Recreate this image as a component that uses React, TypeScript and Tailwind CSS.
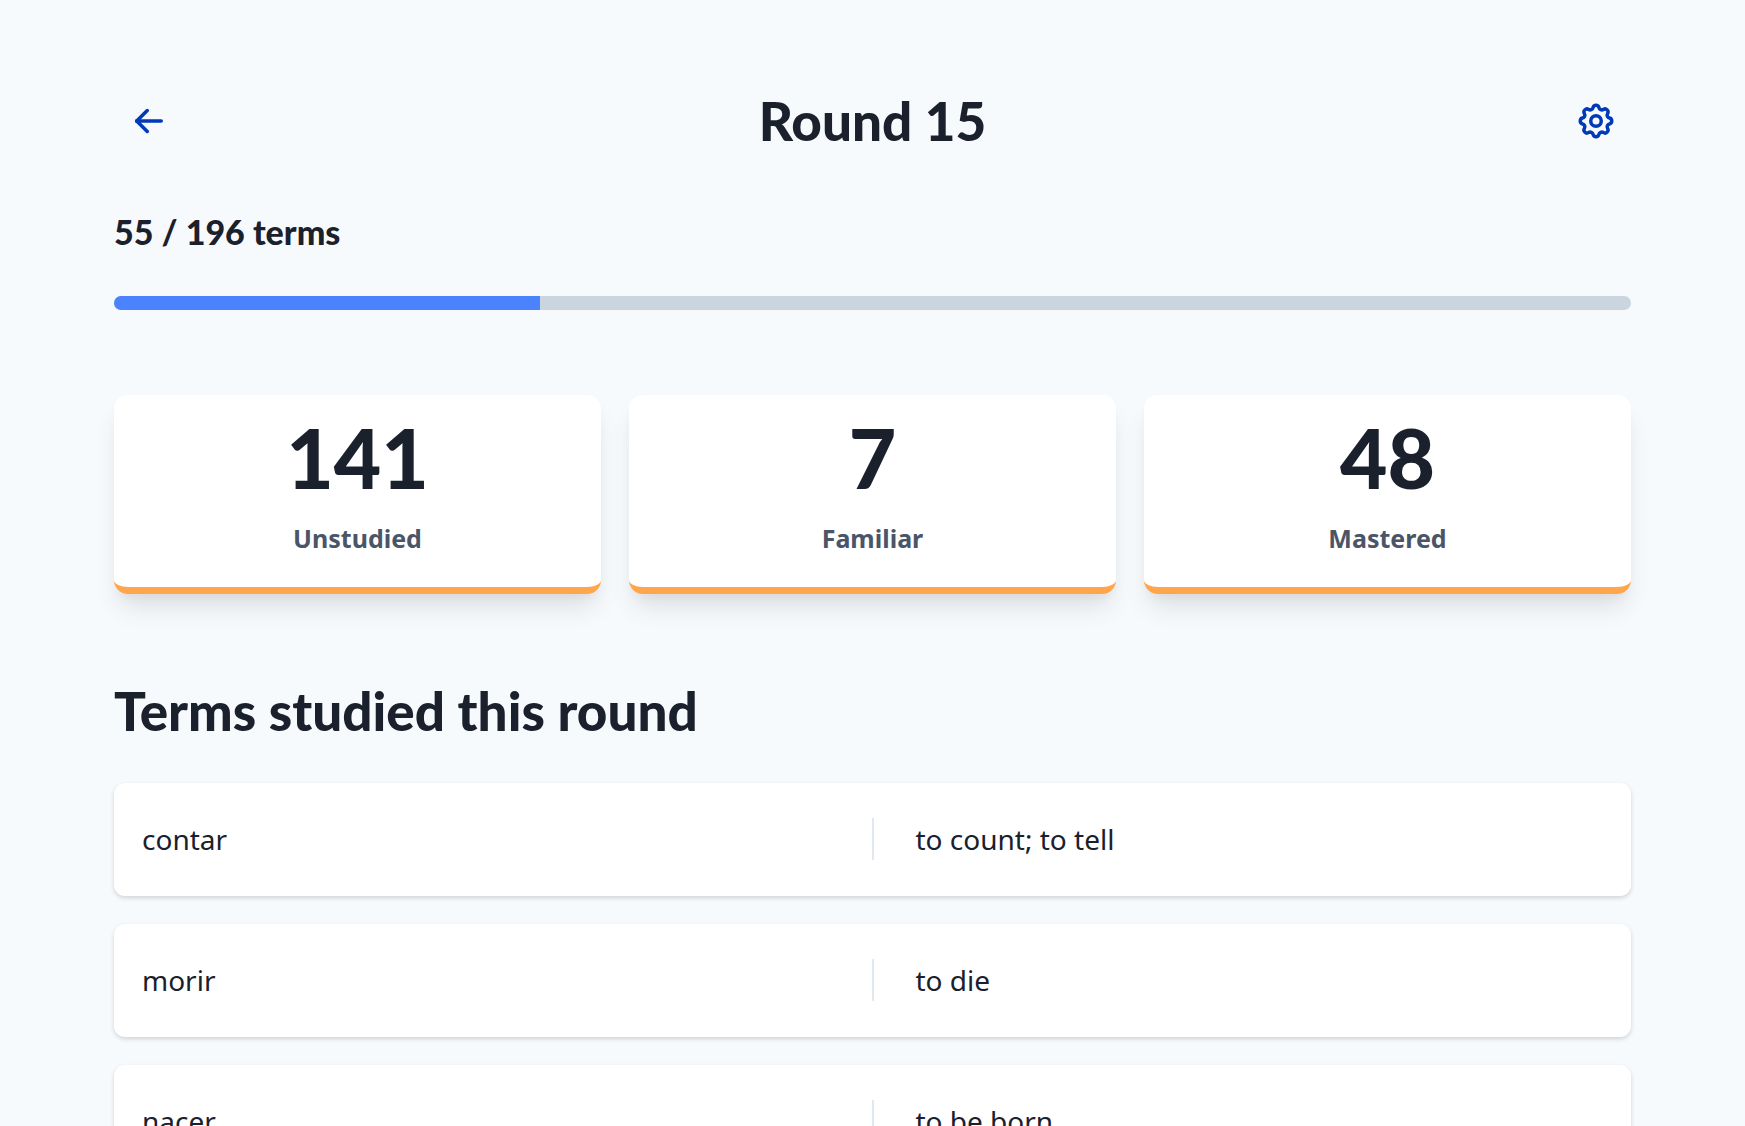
import type { ReactNode } from "react";
import { TbArrowLeft, TbSettings } from "react-icons/tb";

const studied = 55;
const total = 196;

const stats = [
  { label: "Unstudied", value: 141 },
  { label: "Familiar", value: 7 },
  { label: "Mastered", value: 48 },
];

const terms = [
  { term: "contar", definition: "to count; to tell" },
  { term: "morir", definition: "to die" },
  { term: "nacer", definition: "to be born" },
];

function IconButton({ label, children }: { label: string; children: ReactNode }) {
  return (
    <button
      type="button"
      aria-label={label}
      className="flex size-[70px] items-center justify-center rounded-xl text-[#003ab8]"
    >
      {children}
    </button>
  );
}

function StatCard({ label, value }: { label: string; value: number }) {
  return (
    <div className="flex flex-col items-center rounded-[14px] border-b-[7px] border-[#ffa54c] bg-white pt-6 pb-[31px] shadow-[0_18px_26px_-5px_rgba(0,0,0,0.1),0_7px_11px_-4px_rgba(0,0,0,0.05)]">
      <p className="font-['Lato',sans-serif] text-[82px] leading-[76px] font-black">{value}</p>
      <p className="mt-[25px] text-[25px] leading-9 font-bold text-[#4a5568]">{label}</p>
    </div>
  );
}

function TermRow({ term, definition }: { term: string; definition: string }) {
  return (
    <li className="grid grid-cols-[1fr_auto_1fr] items-center rounded-[11px] bg-white px-7 pt-[35px] pb-9 text-[28px] leading-[42px] shadow-[0_2px_5px_0_rgba(0,0,0,0.1),0_2px_4px_0_rgba(0,0,0,0.06)]">
      <p>{term}</p>
      <div className="h-[42px] w-[2px] bg-[#e2e8f0]" />
      <p className="pl-[42px]">{definition}</p>
    </li>
  );
}

export default function App() {
  return (
    <div className="h-screen overflow-hidden bg-[#f7fafc] font-['Noto_Sans',sans-serif] text-[#1a202c]">
      <main className="px-[114px] pt-[86px]">
        <header className="flex items-center justify-between">
          <IconButton label="Back">
            <TbArrowLeft className="size-[42px]" />
          </IconButton>
          <h1 className="font-['Lato',sans-serif] text-[53px] leading-[64px] font-black">Round 15</h1>
          <IconButton label="Settings">
            <TbSettings className="size-[42px]" />
          </IconButton>
        </header>

        <section className="mt-14 flex flex-col gap-11">
          <h2 className="font-['Lato',sans-serif] text-[34px] leading-10 font-black">
            {studied} / {total} terms
          </h2>
          <div
            role="progressbar"
            aria-label="Terms studied"
            aria-valuenow={studied}
            aria-valuemax={total}
            className="h-[14px] overflow-hidden rounded-[7px] bg-[#cbd5e0]"
          >
            <div className="h-full bg-[#4b83ff]" style={{ width: `${(studied / total) * 100}%` }} />
          </div>
        </section>

        <section className="mt-[85px] grid grid-cols-3 gap-7">
          {stats.map((stat) => (
            <StatCard key={stat.label} {...stat} />
          ))}
        </section>

        <section className="mt-[85px]">
          <h2 className="font-['Lato',sans-serif] text-[53px] leading-[64px] font-black">
            Terms studied this round
          </h2>
          <ul className="mt-10 flex flex-col gap-7">
            {terms.map((row) => (
              <TermRow key={row.term} {...row} />
            ))}
          </ul>
        </section>
      </main>
    </div>
  );
}
